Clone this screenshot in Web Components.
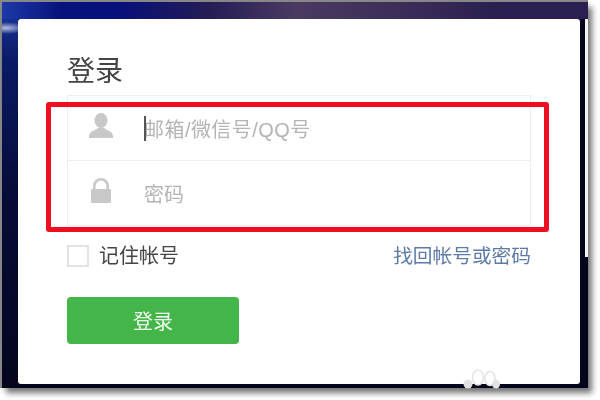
<!DOCTYPE html>
<html lang="zh">
<head>
<meta charset="utf-8">
<title>登录</title>
<style>
  html, body { margin: 0; height: 100%; background: #fff; overflow: hidden; }
  body { font-family: "Liberation Sans", "Noto Sans CJK SC", sans-serif; }
</style>
</head>
<body>
<shot-frame>
  <login-card heading="登录">
    <login-field icon="user" placeholder="邮箱/微信号/QQ号" focused></login-field>
    <login-field icon="lock" placeholder="密码"></login-field>
    <login-options slot="after"></login-options>
    <login-button slot="after">登录</login-button>
  </login-card>
</shot-frame>

<script>
class ShotFrame extends HTMLElement {
  connectedCallback() {
    this.attachShadow({ mode: 'open' });
    this.shadowRoot.innerHTML = `
      <style>
        :host {
          display: block;
          width: 598px;
          height: 398px;
          padding: 2px 0 0 2px;
          background: #fff;
          box-sizing: border-box;
          position: relative;
        }
        .rim {
          position: absolute;
          inset: 0 10px 10px 0;
          background: #8a8a8a;
        }
        .frame {
          position: relative;
          width: 586px;
          height: 386px;
          padding: 17px 8px 4px 16px;
          box-sizing: border-box;
          background:
            radial-gradient(ellipse 22px 6px at 4px 26px, rgba(215,225,245,.8), transparent 100%),
            linear-gradient(90deg, #1c3aa8 0, #07127c 10%, #07107a 20%, #241c55 35%, #4a3a62 50%, #3a2c58 70%, #2a1f50 85%, #2a1f50 100%) 0 0 / 100% 17px no-repeat,
            linear-gradient(180deg, #1a3aa0 0, #0a1a66 15%, #060c38 50%, #05051c 100%) 0 0 / 16px 100% no-repeat,
            #05051c;
          box-shadow: 4px 5px 6px rgba(0,0,0,.55);
        }
        .bar {
          position: absolute;
          left: 583px;
          top: 17px;
          width: 3px;
          height: 238px;
          background: #f4f4f6;
        }
      </style>
      <div class="rim"></div>
      <div class="frame">
        <slot></slot>
        <div class="bar"></div>
      </div>
    `;
  }
}

class LoginCard extends HTMLElement {
  connectedCallback() {
    this.attachShadow({ mode: 'open' });
    this.shadowRoot.innerHTML = `
      <style>
        :host {
          display: block;
          position: relative;
          width: 562px;
          height: 365px;
          padding: 31px 49px 0;
          box-sizing: border-box;
          background: #fff;
          border-radius: 3px;
          filter: blur(.6px);
        }
        h1 {
          margin: 0 0 2px;
          font-size: 28px;
          line-height: 43px;
          font-weight: 400;
          color: #444;
        }
        .group {
          width: 464px;
          height: 131px;
          box-sizing: border-box;
          border: 1px solid #eceef2;
          border-bottom: 0;
          display: grid;
          grid-template-rows: 65px 65px;
        }
        .mark {
          position: absolute;
          left: 28px;
          top: 83px;
          width: 503px;
          height: 130px;
          box-sizing: border-box;
          border: 5px solid #ee1022;
          border-radius: 3px;
        }
        .paw {
          position: absolute;
          left: 444px;
          top: 350px;
        }
      </style>
      <h1></h1>
      <div class="group"><slot></slot></div>
      <slot name="after"></slot>
      <div class="mark"></div>
      <svg class="paw" width="40" height="20" viewBox="0 0 40 20" fill="none">
        <ellipse cx="6" cy="15" rx="4.500" ry="4.500" fill="#e2e2e2"/>
        <ellipse cx="16" cy="8.500" rx="5.500" ry="7.500" fill="#fff" stroke="#e4e4e4" stroke-width="1.500"/>
        <ellipse cx="28" cy="9.500" rx="5" ry="7" fill="#fff" stroke="#e4e4e4" stroke-width="1.500"/>
        <ellipse cx="34" cy="15" rx="4" ry="4.500" fill="#e2e2e2"/>
      </svg>
    `;
    this.shadowRoot.querySelector('h1').textContent = this.getAttribute('heading');
  }
}

class LoginField extends HTMLElement {
  connectedCallback() {
    this.attachShadow({ mode: 'open' });
    const icons = {
      user: `<svg width="24" height="25" viewBox="0 0 24 25"><ellipse cx="12" cy="7.500" rx="6.500" ry="7.500" fill="#c8c8c8"/><path d="M0 25v-2c0-3 3-5 6-6l3-2h6l3 2c3 1 6 3 6 6v2z" fill="#c8c8c8"/></svg>`,
      lock: `<svg width="20" height="25" viewBox="0 0 20 25"><path d="M3.300 11V8a6.700 6.700 0 0 1 13.400 0v3" fill="none" stroke="#c8c8c8" stroke-width="2.600"/><rect y="11" width="20" height="14" rx="1" fill="#c8c8c8"/></svg>`
    };
    this.shadowRoot.innerHTML = `
      <style>
        :host {
          display: grid;
          grid-template-columns: 76px 1fr;
          align-items: center;
          border-bottom: 1px solid #eceef2;
          position: relative;
        }
        :host(:last-child) { border-bottom: 0; }
        .icon { width: 66px; display: flex; justify-content: center; padding-bottom: 6px; }
        .icon svg { display: block; }
        .text {
          font-size: 20px;
          line-height: 28px;
          color: #b4b4b4;
          position: relative;
          padding-top: 4px;
        }
        .wide { letter-spacing: .45px; }
        .caret {
          position: absolute;
          left: 0;
          top: 4px;
          width: 2px;
          height: 25px;
          background: #555;
        }
      </style>
      <div class="icon">${icons[this.getAttribute('icon')]}</div>
      <div class="text ${this.hasAttribute('focused') ? 'wide' : ''}">${this.getAttribute('placeholder')}${this.hasAttribute('focused') ? '<span class="caret"></span>' : ''}</div>
    `;
  }
}

class LoginOptions extends HTMLElement {
  connectedCallback() {
    this.attachShadow({ mode: 'open' });
    this.shadowRoot.innerHTML = `
      <style>
        :host {
          display: flex;
          width: 464px;
          height: 22px;
          margin-top: 19px;
          align-items: center;
          justify-content: space-between;
          font-size: 20px;
          line-height: 22px;
        }
        label { display: flex; align-items: center; gap: 10px; color: #444; }
        .box {
          width: 22px;
          height: 22px;
          box-sizing: border-box;
          border: 2px solid #e2e2e4;
          background: #fff;
        }
        a { color: #5e7ba8; text-decoration: none; font-size: 19.700px; }
      </style>
      <label><span class="box"></span>记住帐号</label>
      <a href="#">找回帐号或密码</a>
    `;
  }
}

class LoginButton extends HTMLElement {
  connectedCallback() {
    this.attachShadow({ mode: 'open' });
    this.shadowRoot.innerHTML = `
      <style>
        :host {
          display: flex;
          width: 172px;
          height: 47px;
          margin-top: 30px;
          align-items: center;
          justify-content: center;
          background: #44b549;
          border-radius: 4px;
          color: #f0fbf0;
          font-size: 20px;
        }
      </style>
      <slot></slot>
    `;
  }
}

customElements.define('shot-frame', ShotFrame);
customElements.define('login-card', LoginCard);
customElements.define('login-field', LoginField);
customElements.define('login-options', LoginOptions);
customElements.define('login-button', LoginButton);
</script>
</body>
</html>
